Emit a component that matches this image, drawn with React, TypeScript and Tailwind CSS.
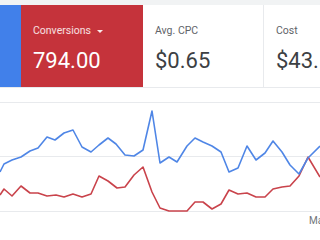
import React from "react"

const blue: [number, number][] = [
  [0, 173], [4, 165], [12, 161], [21, 158], [30, 152], [38, 149], [47, 138], [55, 141],
  [64, 134], [73, 131], [82, 148], [91, 153], [99, 146], [108, 139], [116, 145], [125, 156],
  [134, 157], [143, 151], [152, 112], [160, 164], [169, 158], [177, 163], [187, 147],
  [195, 139], [203, 143], [212, 147], [221, 153], [229, 173], [238, 169], [247, 147],
  [256, 161], [265, 154], [273, 142], [282, 153], [290, 166], [299, 175], [308, 159], [320, 147],
]

const red: [number, number][] = [
  [0, 196], [4, 190], [12, 197], [21, 187], [30, 194], [38, 194], [47, 197], [56, 196],
  [64, 198], [73, 195], [82, 198], [91, 195], [99, 177], [108, 182], [117, 189], [125, 188],
  [134, 176], [143, 168], [152, 193], [160, 209], [169, 212], [177, 212], [187, 212],
  [195, 203], [203, 203], [212, 210], [221, 205], [229, 191], [238, 195], [247, 194],
  [256, 198], [265, 198], [273, 190], [282, 188], [290, 187], [299, 177], [308, 158], [320, 178],
]

const toPoints = (pts: [number, number][]) => pts.map(([x, y]) => `${x},${y}`).join(" ")

function MetricCard({ label, value, last }: { label: string; value: string; last?: boolean }) {
  return (
    <div
      className={`shrink-0 w-[121px] bg-white pl-3 pt-[19px] ${
        last ? "" : "border-r border-[#e8eaed]"
      }`}
    >
      <div className="text-[10.5px] leading-[14px] text-[#5f6368]">{label}</div>
      <div className="mt-[12px] text-[22px] leading-[22px] text-[#3c4043] whitespace-nowrap">{value}</div>
    </div>
  )
}

export default function App() {
  return (
    <div className="w-[320px] h-[240px] overflow-hidden bg-white" style={{ fontFamily: "Roboto, sans-serif" }}>
      <div className="h-[5px] bg-[#f1f3f4]" />

      {/* Scorecards */}
      <div className="flex h-[83px] overflow-hidden border-b border-[#e8eaed]">
        <div className="shrink-0 w-[21px] bg-[#4180ea]" />
        <div className="shrink-0 w-[122px] bg-[#c5333b] pl-3 pt-[19px] text-white">
          <div className="flex items-center gap-[6px] text-[10.5px] leading-[14px] text-white/85">
            Conversions
            <span className="w-0 h-0 border-l-[3px] border-r-[3px] border-t-[3px] border-l-transparent border-r-transparent border-t-white/90" />
          </div>
          <div className="mt-[12px] text-[22px] leading-[22px]">794.00</div>
        </div>
        <MetricCard label="Avg. CPC" value="$0.65" />
        <MetricCard label="Cost" value="$43.18" last />
      </div>

      {/* Chart */}
      <div className="relative h-[151px]">
        <svg width="320" height="151" viewBox="0 89 320 151" className="block">
          <line x1="0" y1="103.5" x2="320" y2="103.5" stroke="#e8eaed" strokeWidth="1" />
          <line x1="0" y1="157.5" x2="320" y2="157.5" stroke="#e8eaed" strokeWidth="1" />
          <line x1="0" y1="212.5" x2="320" y2="212.5" stroke="#e8eaed" strokeWidth="1" />
          <polyline points={toPoints(red)} fill="none" stroke="#c9434b" strokeWidth="1.6" strokeLinejoin="round" />
          <polyline points={toPoints(blue)} fill="none" stroke="#4f86e6" strokeWidth="1.6" strokeLinejoin="round" />
        </svg>
        <span className="absolute left-[309px] top-[127px] text-[10px] leading-[12px] text-[#70757a] whitespace-nowrap">
          Mar
        </span>
      </div>
    </div>
  )
}
